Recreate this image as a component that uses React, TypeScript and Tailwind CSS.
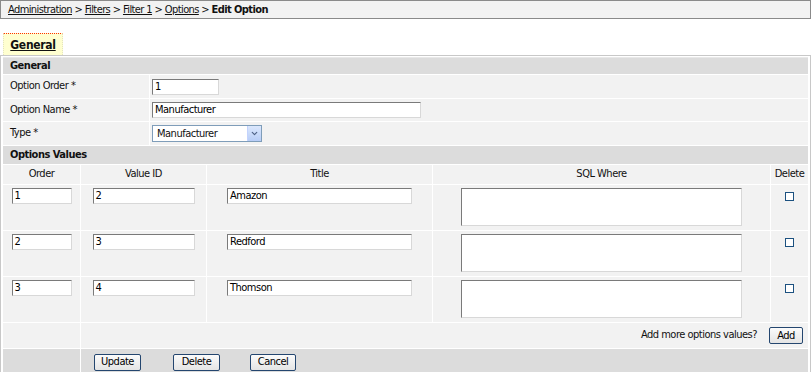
import { ChevronDown } from "lucide-react"

const font = "font-['DejaVu_Sans_Condensed','Liberation_Sans',sans-serif] tracking-[-0.5px]"

function TextBox({ value, w }: { value: string; w: string }) {
  return (
    <div
      className={`${w} h-[16px] bg-white border border-t-[#7a7a7a] border-l-[#7a7a7a] border-r-[#d8d8d8] border-b-[#d8d8d8] px-[2px] text-[11px] leading-[14px] text-black`}
    >
      {value}
    </div>
  )
}

function Btn({ label, w }: { label: string; w: string }) {
  return (
    <button
      className={`${w} h-[17px] rounded-[2px] border border-[#24466f] bg-gradient-to-b from-[#fbfbfb] to-[#e4e4e4] text-[11px] leading-[14px] text-black`}
    >
      {label}
    </button>
  )
}

const rows = [
  { order: "1", id: "2", title: "Amazon" },
  { order: "2", id: "3", title: "Redford" },
  { order: "3", id: "4", title: "Thomson" },
]

export default function App() {
  return (
    <div className={`w-[812px] h-[372px] bg-white overflow-hidden ${font} text-[11px] text-[#111]`}>
      {/* Breadcrumb */}
      <div className="w-[811px] h-[19px] border border-[#8a8a8a] bg-[#f2f2f2] pl-[7px] leading-[17px] tracking-[-0.6px]">
        <span className="underline">Administration</span> &gt; <span className="underline">Filters</span> &gt;{" "}
        <span className="underline">Filter 1</span> &gt; <span className="underline">Options</span> &gt;{" "}
        <span className="font-bold">Edit Option</span>
      </div>

      {/* Tabs */}
      <div className="mt-[14px] pl-[3px] flex">
        <div className="w-[60px] h-[22px] bg-[#ffffd0] border-t border-dotted border-t-[#ff3300] border-x border-x-[#e4e4c0] flex items-center justify-center font-bold underline text-[12px] tracking-[-0.3px]">
          General
        </div>
      </div>

      {/* Panel */}
      <div className="w-[811px] h-[317px] border-x border-t border-[#c8c8c8] px-[2px] pt-[1px]">
        <div className="h-[17px] bg-[#dcdcdc] border-t border-[#e8e8e8] pl-[7px] font-bold leading-[16px]">General</div>
        <div className="grid grid-cols-[146px_1fr] gap-px bg-white pt-px">
          <div className="h-[23px] bg-[#f2f2f2] pl-[7px] flex items-center">Option Order *</div>
          <div className="h-[23px] bg-[#f2f2f2] pl-[2px] flex items-center">
            <TextBox value="1" w="w-[67px]" />
          </div>
          <div className="h-[22px] bg-[#f2f2f2] pl-[7px] flex items-center">Option Name *</div>
          <div className="h-[22px] bg-[#f2f2f2] pl-[2px] flex items-center">
            <TextBox value="Manufacturer" w="w-[269px]" />
          </div>
          <div className="h-[23px] bg-[#f2f2f2] pl-[7px] flex items-center">Type *</div>
          <div className="h-[23px] bg-[#f2f2f2] pl-[2px] flex items-center">
            <div className="w-[110px] h-[17px] bg-white border border-[#7f9db9] flex items-center justify-between">
              <span className="pl-[4px] leading-[14px]">Manufacturer</span>
              <span className="w-[14px] h-[15px] bg-gradient-to-b from-[#dce8fd] to-[#b7cdf7] border-l border-[#c3d3fd] flex items-center justify-center">
                <ChevronDown size={9} strokeWidth={3} color="#4d6185" />
              </span>
            </div>
          </div>
        </div>

        <div className="mt-px h-[18px] bg-[#dcdcdc] pl-[7px] font-bold leading-[18px]">Options Values</div>

        <div className="grid grid-cols-[77px_125px_225px_337px_1fr] gap-px bg-white pt-px">
          <div className="h-[19px] bg-[#f2f2f2] flex items-center justify-center">Order</div>
          <div className="h-[19px] bg-[#f2f2f2] flex items-center justify-center">Value ID</div>
          <div className="h-[19px] bg-[#f2f2f2] flex items-center justify-center">Title</div>
          <div className="h-[19px] bg-[#f2f2f2] flex items-center justify-center">SQL Where</div>
          <div className="h-[19px] bg-[#f2f2f2] flex items-center justify-center">Delete</div>

          {rows.map((r) => (
            <>
              <div key={r.order + "a"} className="h-[45px] bg-[#f2f2f2] flex justify-center pt-[3px]">
                <TextBox value={r.order} w="w-[60px]" />
              </div>
              <div key={r.order + "b"} className="h-[45px] bg-[#f2f2f2] flex justify-center pt-[3px]">
                <TextBox value={r.id} w="w-[102px]" />
              </div>
              <div key={r.order + "c"} className="h-[45px] bg-[#f2f2f2] flex justify-center pt-[3px]">
                <TextBox value={r.title} w="w-[185px]" />
              </div>
              <div key={r.order + "d"} className="h-[45px] bg-[#f2f2f2] flex justify-center pt-[3px]">
                <div className="w-[281px] h-[38px] bg-white border border-t-[#7a7a7a] border-l-[#7a7a7a] border-r-[#d8d8d8] border-b-[#d8d8d8]" />
              </div>
              <div key={r.order + "e"} className="h-[45px] bg-[#f2f2f2] flex justify-center pt-[7px]">
                <div className="w-[9px] h-[9px] border border-[#1c5180] bg-white" />
              </div>
            </>
          ))}

          <div className="h-[25px] bg-[#f2f2f2]" />
          <div className="col-span-4 h-[25px] bg-[#f2f2f2] flex items-center justify-end gap-[12px] pr-[5px]">
            <span>Add more options values?</span>
            <Btn label="Add" w="w-[34px]" />
          </div>

          <div className="h-[26px] bg-[#dcdcdc]" />
          <div className="col-span-4 h-[26px] bg-[#dcdcdc] flex items-center pl-[13px]">
            <Btn label="Update" w="w-[47px]" />
            <span className="ml-[32px]" />
            <Btn label="Delete" w="w-[47px]" />
            <span className="ml-[30px]" />
            <Btn label="Cancel" w="w-[46px]" />
          </div>
        </div>
      </div>
    </div>
  )
}
